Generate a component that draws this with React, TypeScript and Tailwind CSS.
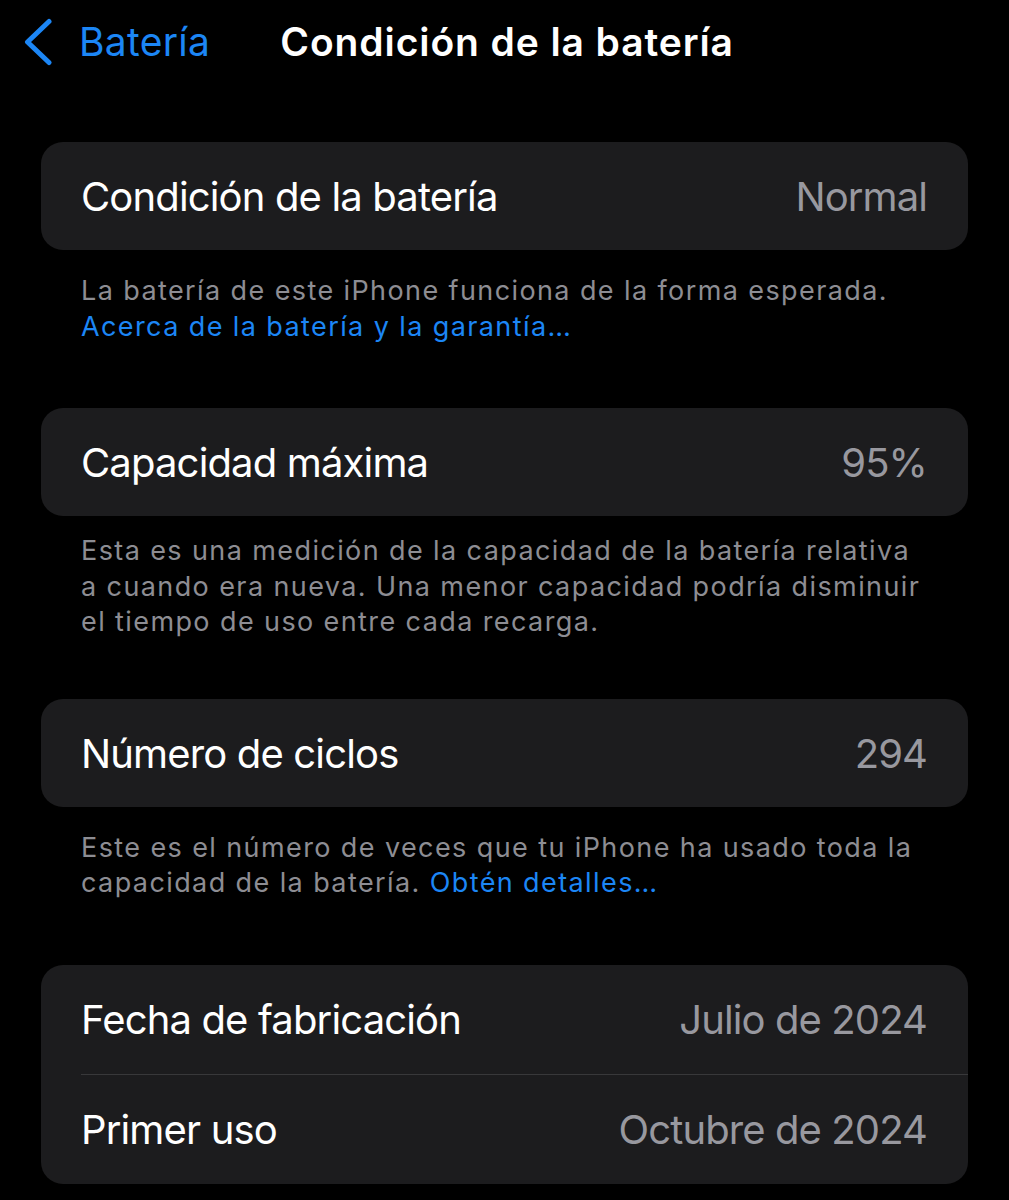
import React from 'react';

type Fila = { etiqueta: string; valor: string };

function Tarjeta({ filas }: { filas: Fila[] }) {
  return (
    <div className="rounded-[22px] bg-[#1c1c1e] overflow-hidden">
      {filas.map((f, i) => (
        <div key={f.etiqueta}>
          {i > 0 && <div className="ml-[40px] h-px bg-[#38383a]" />}
          <div className={`flex items-center justify-between pl-[40px] pr-[41px] pt-[2px] ${filas.length > 1 ? 'h-[109px]' : 'h-[108px]'}`}>
            <span className="text-[40px] text-white tracking-[-0.85px]">{f.etiqueta}</span>
            <span className="text-[40px] text-[#98989f] tracking-[-0.9px]">{f.valor}</span>
          </div>
        </div>
      ))}
    </div>
  );
}

function Nota({ children, className = '' }: { children: React.ReactNode; className?: string }) {
  return (
    <p className={`pl-[40px] text-[27px] leading-[35.5px] tracking-[1.4px] text-[#8d8d93] whitespace-nowrap ${className}`}>
      {children}
    </p>
  );
}

export default function App() {
  return (
    <div className="min-h-[1200px] w-full bg-black" style={{ fontFamily: 'Inter, "Noto Sans", sans-serif' }}>
      {/* barra de navegación */}
      <div className="flex h-[84px] items-center pl-[22px]">
        <div className="flex items-center text-[#1c86f5]">
          <svg width="32" height="48" viewBox="0 0 32 48" fill="none">
            <path d="M27 3.5 L5.5 24 L27 44.5" stroke="currentColor" strokeWidth="5" strokeLinecap="round" strokeLinejoin="round" />
          </svg>
          <span className="ml-[25px] text-[39px] tracking-[0.3px]">Batería</span>
        </div>
        <h1 className="ml-[70px] text-[39px] font-semibold text-white tracking-[0.9px]">Condición de la batería</h1>
      </div>

      <div className="px-[41px] pt-[58px]">
        <Tarjeta filas={[{ etiqueta: 'Condición de la batería', valor: 'Normal' }]} />
        <Nota className="mt-[23px]">
          La batería de este iPhone funciona de la forma esperada.
          <br />
          <span className="text-[#1c86f5]">Acerca de la batería y la garantía…</span>
        </Nota>

        <div className="mt-[64px]">
          <Tarjeta filas={[{ etiqueta: 'Capacidad máxima', valor: '95%' }]} />
        </div>
        <Nota className="mt-[17px]">
          Esta es una medición de la capacidad de la batería relativa
          <br />
          a cuando era nueva. Una menor capacidad podría disminuir
          <br />
          el tiempo de uso entre cada recarga.
        </Nota>

        <div className="mt-[59px]">
          <Tarjeta filas={[{ etiqueta: 'Número de ciclos', valor: '294' }]} />
        </div>
        <Nota className="mt-[23px]">
          Este es el número de veces que tu iPhone ha usado toda la
          <br />
          capacidad de la batería. <span className="text-[#1c86f5]">Obtén detalles…</span>
        </Nota>

        <div className="mt-[64px]">
          <Tarjeta
            filas={[
              { etiqueta: 'Fecha de fabricación', valor: 'Julio de 2024' },
              { etiqueta: 'Primer uso', valor: 'Octubre de 2024' },
            ]}
          />
        </div>
      </div>
    </div>
  );
}
